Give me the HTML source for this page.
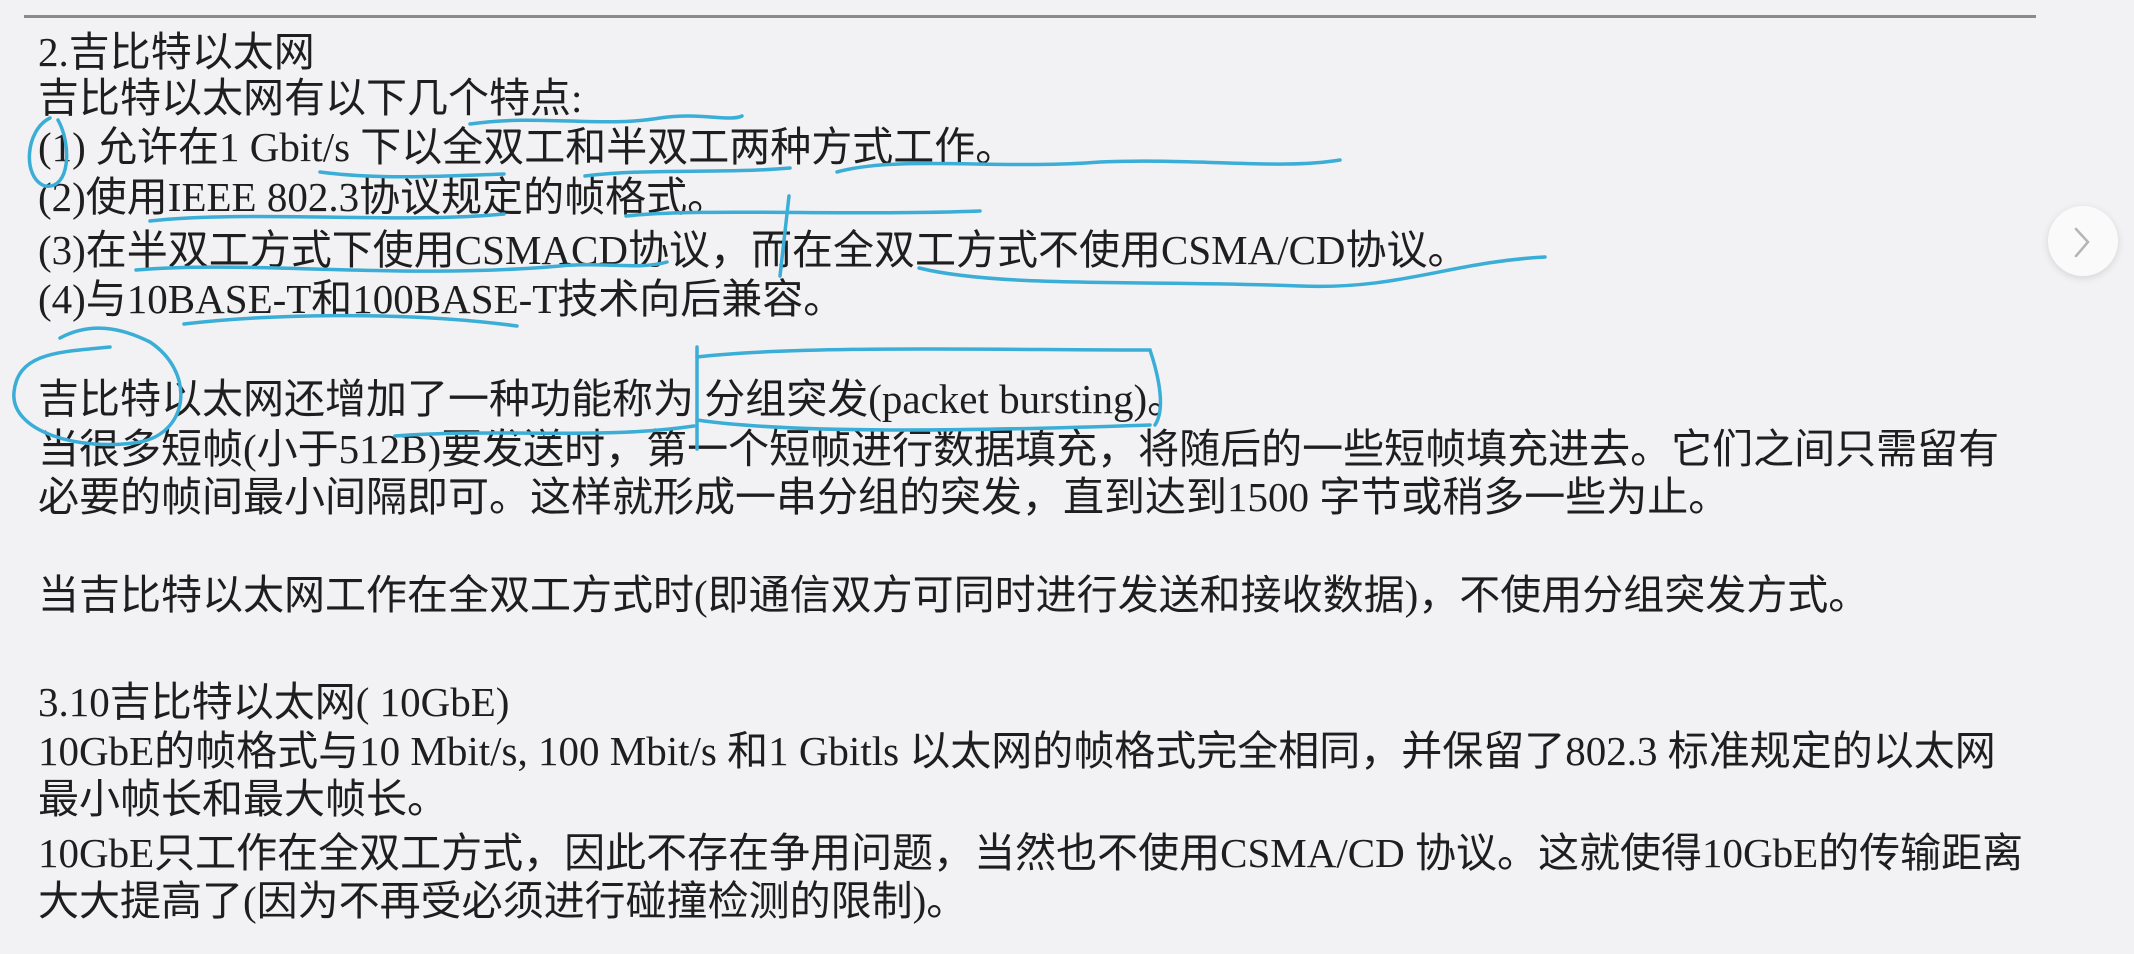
<!DOCTYPE html>
<html><head><meta charset="utf-8"><style>
html,body{margin:0;padding:0;}
body{width:2134px;height:954px;background:#f2f1f4;position:relative;overflow:hidden;
font-family:"Liberation Serif","Noto Sans CJK SC",serif;color:#1e1e1e;font-size:41px;}
.l{position:absolute;left:38px;white-space:nowrap;line-height:49px;height:49px;}
.rule{position:absolute;left:24px;top:15px;width:2012px;height:3px;background:#8a8a8c;}
.btn{position:absolute;left:2048px;top:206px;width:70px;height:70px;border-radius:50%;background:#fafafa;box-shadow:0 2px 8px rgba(0,0,0,.12);}
svg{position:absolute;left:0;top:0;}
</style></head><body>
<div class="rule"></div>
<div class="l" style="top:28px">2.吉比特以太网</div>
<div class="l" style="top:74px">吉比特以太网有以下几个特点:</div>
<div class="l" style="top:123px">(1) 允许在1 Gbit/s 下以全双工和半双工两种方式工作。</div>
<div class="l" style="top:173px">(2)使用IEEE 802.3协议规定的帧格式。</div>
<div class="l" style="top:226px">(3)在半双工方式下使用CSMACD协议，而在全双工方式不使用CSMA/CD协议。</div>
<div class="l" style="top:275px">(4)与10BASE-T和100BASE-T技术向后兼容。</div>
<div class="l" style="top:375px">吉比特以太网还增加了一种功能称为 分组突发(packet bursting)。</div>
<div class="l" style="top:425px">当很多短帧(小于512B)要发送时，第一个短帧进行数据填充，将随后的一些短帧填充进去。它们之间只需留有</div>
<div class="l" style="top:473px">必要的帧间最小间隔即可。这样就形成一串分组的突发，直到达到1500 字节或稍多一些为止。</div>
<div class="l" style="top:571px">当吉比特以太网工作在全双工方式时(即通信双方可同时进行发送和接收数据)，不使用分组突发方式。</div>
<div class="l" style="top:678px">3.10吉比特以太网( 10GbE)</div>
<div class="l" style="top:727px">10GbE的帧格式与10 Mbit/s, 100 Mbit/s 和1 Gbitls 以太网的帧格式完全相同，并保留了802.3 标准规定的以太网</div>
<div class="l" style="top:775px">最小帧长和最大帧长。</div>
<div class="l" style="top:829px">10GbE只工作在全双工方式，因此不存在争用问题，当然也不使用CSMA/CD 协议。这就使得10GbE的传输距离</div>
<div class="l" style="top:877px">大大提高了(因为不再受必须进行碰撞检测的限制)。</div>
<div class="btn"></div>
<svg width="2134" height="954" fill="none" stroke="#3aaed6" stroke-width="3.5" stroke-linecap="round">
<path d="M2076 229 L2088 242 L2076 256" stroke="#b5b5b8" stroke-width="2.5"/>
<path d="M470 124 C540 114 600 128 660 118 C700 112 730 122 742 116"/>
<path d="M50 118 C25 130 22 178 45 186 C70 190 72 145 58 120"/>
<path d="M320 172 C380 180 450 176 504 174"/>
<path d="M585 176 C650 168 720 174 790 168"/>
<path d="M837 172 C900 155 1000 170 1100 162 C1200 158 1280 170 1340 160"/>
<path d="M150 221 C250 210 400 224 504 214"/>
<path d="M626 216 C700 208 850 216 980 211"/>
<path d="M789 196 L780 276"/>
<path d="M136 270 C250 260 400 280 560 266 C600 262 640 270 667 262"/>
<path d="M919 268 C1000 288 1150 280 1300 286 C1400 290 1450 262 1545 257"/>
<path d="M184 324 C260 315 400 310 517 326"/>
<path d="M60 338 C90 322 120 327 150 342 C195 372 190 432 140 442 C80 452 10 432 14 392 C18 352 60 352 110 347"/>
<path d="M395 436 C500 428 600 440 694 426"/>
<path d="M697 347 L697 449"/>
<path d="M697 357 C800 345 1000 350 1150 350 C1160 380 1165 410 1155 425"/>
<path d="M697 420 C800 435 1000 430 1150 425"/>
</svg>
</body></html>
